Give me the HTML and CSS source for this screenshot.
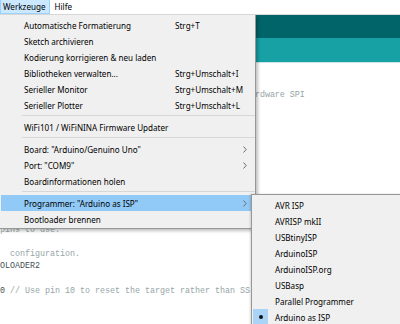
FILE: index.html
```html
<!DOCTYPE html>
<html lang="de">
<head>
    <meta charset="UTF-8">
    <title>Werkzeuge</title>
    <link rel="stylesheet" href="styles.css">
</head>
<body>
    <div class="window">
        <div class="menubar">
            <span class="menubar-item active">Werkzeuge</span>
            <span class="menubar-item">Hilfe</span>
        </div>

        <div class="editor">
            <div class="toolbar"></div>
            <div class="tabs"></div>
            <div class="code">
                <div class="line"> </div>
                <div class="line"> </div>
                <div class="line">                                                 hardware SPI</div>
                <div class="line"> </div>
                <div class="line"> </div>
                <div class="line"> </div>
                <div class="line"> </div>
                <div class="line"> </div>
                <div class="line"> </div>
                <div class="line"> </div>
                <div class="line"> </div>
                <div class="line"> </div>
                <div class="line"> </div>
                <div class="line">pins to use:</div>
                <div class="line"> </div>
                <div class="line">  configuration.</div>
                <div class="line plain">OLOADER2</div>
                <div class="line"> </div>
                <div class="line"><span class="plain">0</span> // Use pin 10 to reset the target rather than SS</div>
            </div>
        </div>

        <!-- Werkzeuge dropdown -->
        <div class="menu">
            <div class="item"><span>Automatische Formatierung</span><span class="key">Strg+T</span></div>
            <div class="item"><span>Sketch archivieren</span></div>
            <div class="item"><span>Kodierung korrigieren &amp; neu laden</span></div>
            <div class="item"><span>Bibliotheken verwalten...</span><span class="key">Strg+Umschalt+I</span></div>
            <div class="item"><span>Serieller Monitor</span><span class="key">Strg+Umschalt+M</span></div>
            <div class="item"><span>Serieller Plotter</span><span class="key">Strg+Umschalt+L</span></div>
            <div class="sep"></div>
            <div class="item"><span>WiFi101 / WiFiNINA Firmware Updater</span></div>
            <div class="sep"></div>
            <div class="item"><span>Board: "Arduino/Genuino Uno"</span><span class="key"></span><svg class="arrow" viewBox="0 0 4 7"><path d="M0.5 0.5 L3.2 3.5 L0.5 6.5" /></svg></div>
            <div class="item"><span>Port: "COM9"</span><span class="key"></span><svg class="arrow" viewBox="0 0 4 7"><path d="M0.5 0.5 L3.2 3.5 L0.5 6.5" /></svg></div>
            <div class="item"><span>Boardinformationen holen</span></div>
            <div class="sep"></div>
            <div class="item hover"><span>Programmer: "Arduino as ISP"</span><span class="key"></span><svg class="arrow" viewBox="0 0 4 7"><path d="M0.5 0.5 L3.2 3.5 L0.5 6.5" /></svg></div>
            <div class="item"><span>Bootloader brennen</span></div>
        </div>

        <!-- Programmer submenu -->
        <div class="submenu">
            <div class="sub-item">AVR ISP</div>
            <div class="sub-item">AVRISP mkII</div>
            <div class="sub-item">USBtinyISP</div>
            <div class="sub-item">ArduinoISP</div>
            <div class="sub-item">ArduinoISP.org</div>
            <div class="sub-item">USBasp</div>
            <div class="sub-item">Parallel Programmer</div>
            <div class="sub-item checked"><span class="check"><span class="dot"></span></span>Arduino as ISP</div>
        </div>
    </div>
</body>
</html>
```

FILE: styles.css
```css
body {
    margin: 0;
    background: #fff;
    font-family: "Noto Sans", "Open Sans", sans-serif;
    font-size: 8.1px;
    color: #000;
}

.window {
    position: relative;
    width: 400px;
    height: 324px;
    overflow: hidden;
}

.menubar {
    display: flex;
    height: 14px;
    border-bottom: 1px solid #dadada;
    background: #fff;
}

.menubar-item {
    padding: 0 3px 0 4px;
    line-height: 13px;
    height: 13px;
    border: 1px solid transparent;
    border-top: none;
}

.menubar-item.active {
    background: #cce8ff;
    border-color: #99d1ff;
    padding: 0 3px 0 2px;
}

.toolbar {
    height: 23px;
    background: #006468;
}

.tabs {
    height: 24px;
    background: #17a1a5;
    border-bottom: 1px solid #c9e6e7;
}

.code {
    padding-top: 1.4px;
    font-family: "Liberation Mono", monospace;
    font-size: 8.333px;
    line-height: 12.25px;
    color: #95a5a6;
}

.code .line {
    height: 12.25px;
    white-space: pre;
}

.code .plain {
    color: #434f54;
}

/* dropdown menus */
.menu {
    position: absolute;
    left: 0;
    top: 15px;
    width: 255px;
    padding: 2px 0 1px;
    background: #f0f0f0;
    border-right: 1px solid #979797;
    border-bottom: 1px solid #979797;
    box-shadow: 2px 2px 3px rgba(0, 0, 0, 0.25);
}

.item {
    display: grid;
    grid-template-columns: 151px 1fr 12px;
    align-items: center;
    height: 16px;
    padding-left: 23px;
    margin-left: 1px;
}

.item.hover {
    background: #91c9f7;
}

.arrow {
    width: 4px;
    height: 7px;
    fill: none;
    stroke: #6d6d6d;
    stroke-width: 1;
}

.sep {
    height: 6px;
    margin-left: 22px;
    position: relative;
}

.sep::after {
    content: "";
    position: absolute;
    left: 0;
    right: 0;
    top: 2px;
    border-top: 1px solid #d7d7d7;
}

.submenu {
    position: absolute;
    left: 251px;
    top: 194px;
    width: 160px;
    height: 140px;
    padding-top: 2px;
    background: #f0f0f0;
    border-left: 1px solid #979797;
    border-top: 1px solid #979797;
    box-shadow: -1px 0 2px rgba(0, 0, 0, 0.15);
}

.sub-item {
    display: flex;
    align-items: center;
    height: 16px;
    padding-left: 23px;
    position: relative;
}

.check {
    position: absolute;
    left: 1px;
    top: 0;
    width: 15px;
    height: 15px;
    background: #a9d4f7;
    display: flex;
    align-items: center;
    justify-content: center;
}

.dot {
    width: 4px;
    height: 4px;
    border-radius: 50%;
    background: #111;
}
```
